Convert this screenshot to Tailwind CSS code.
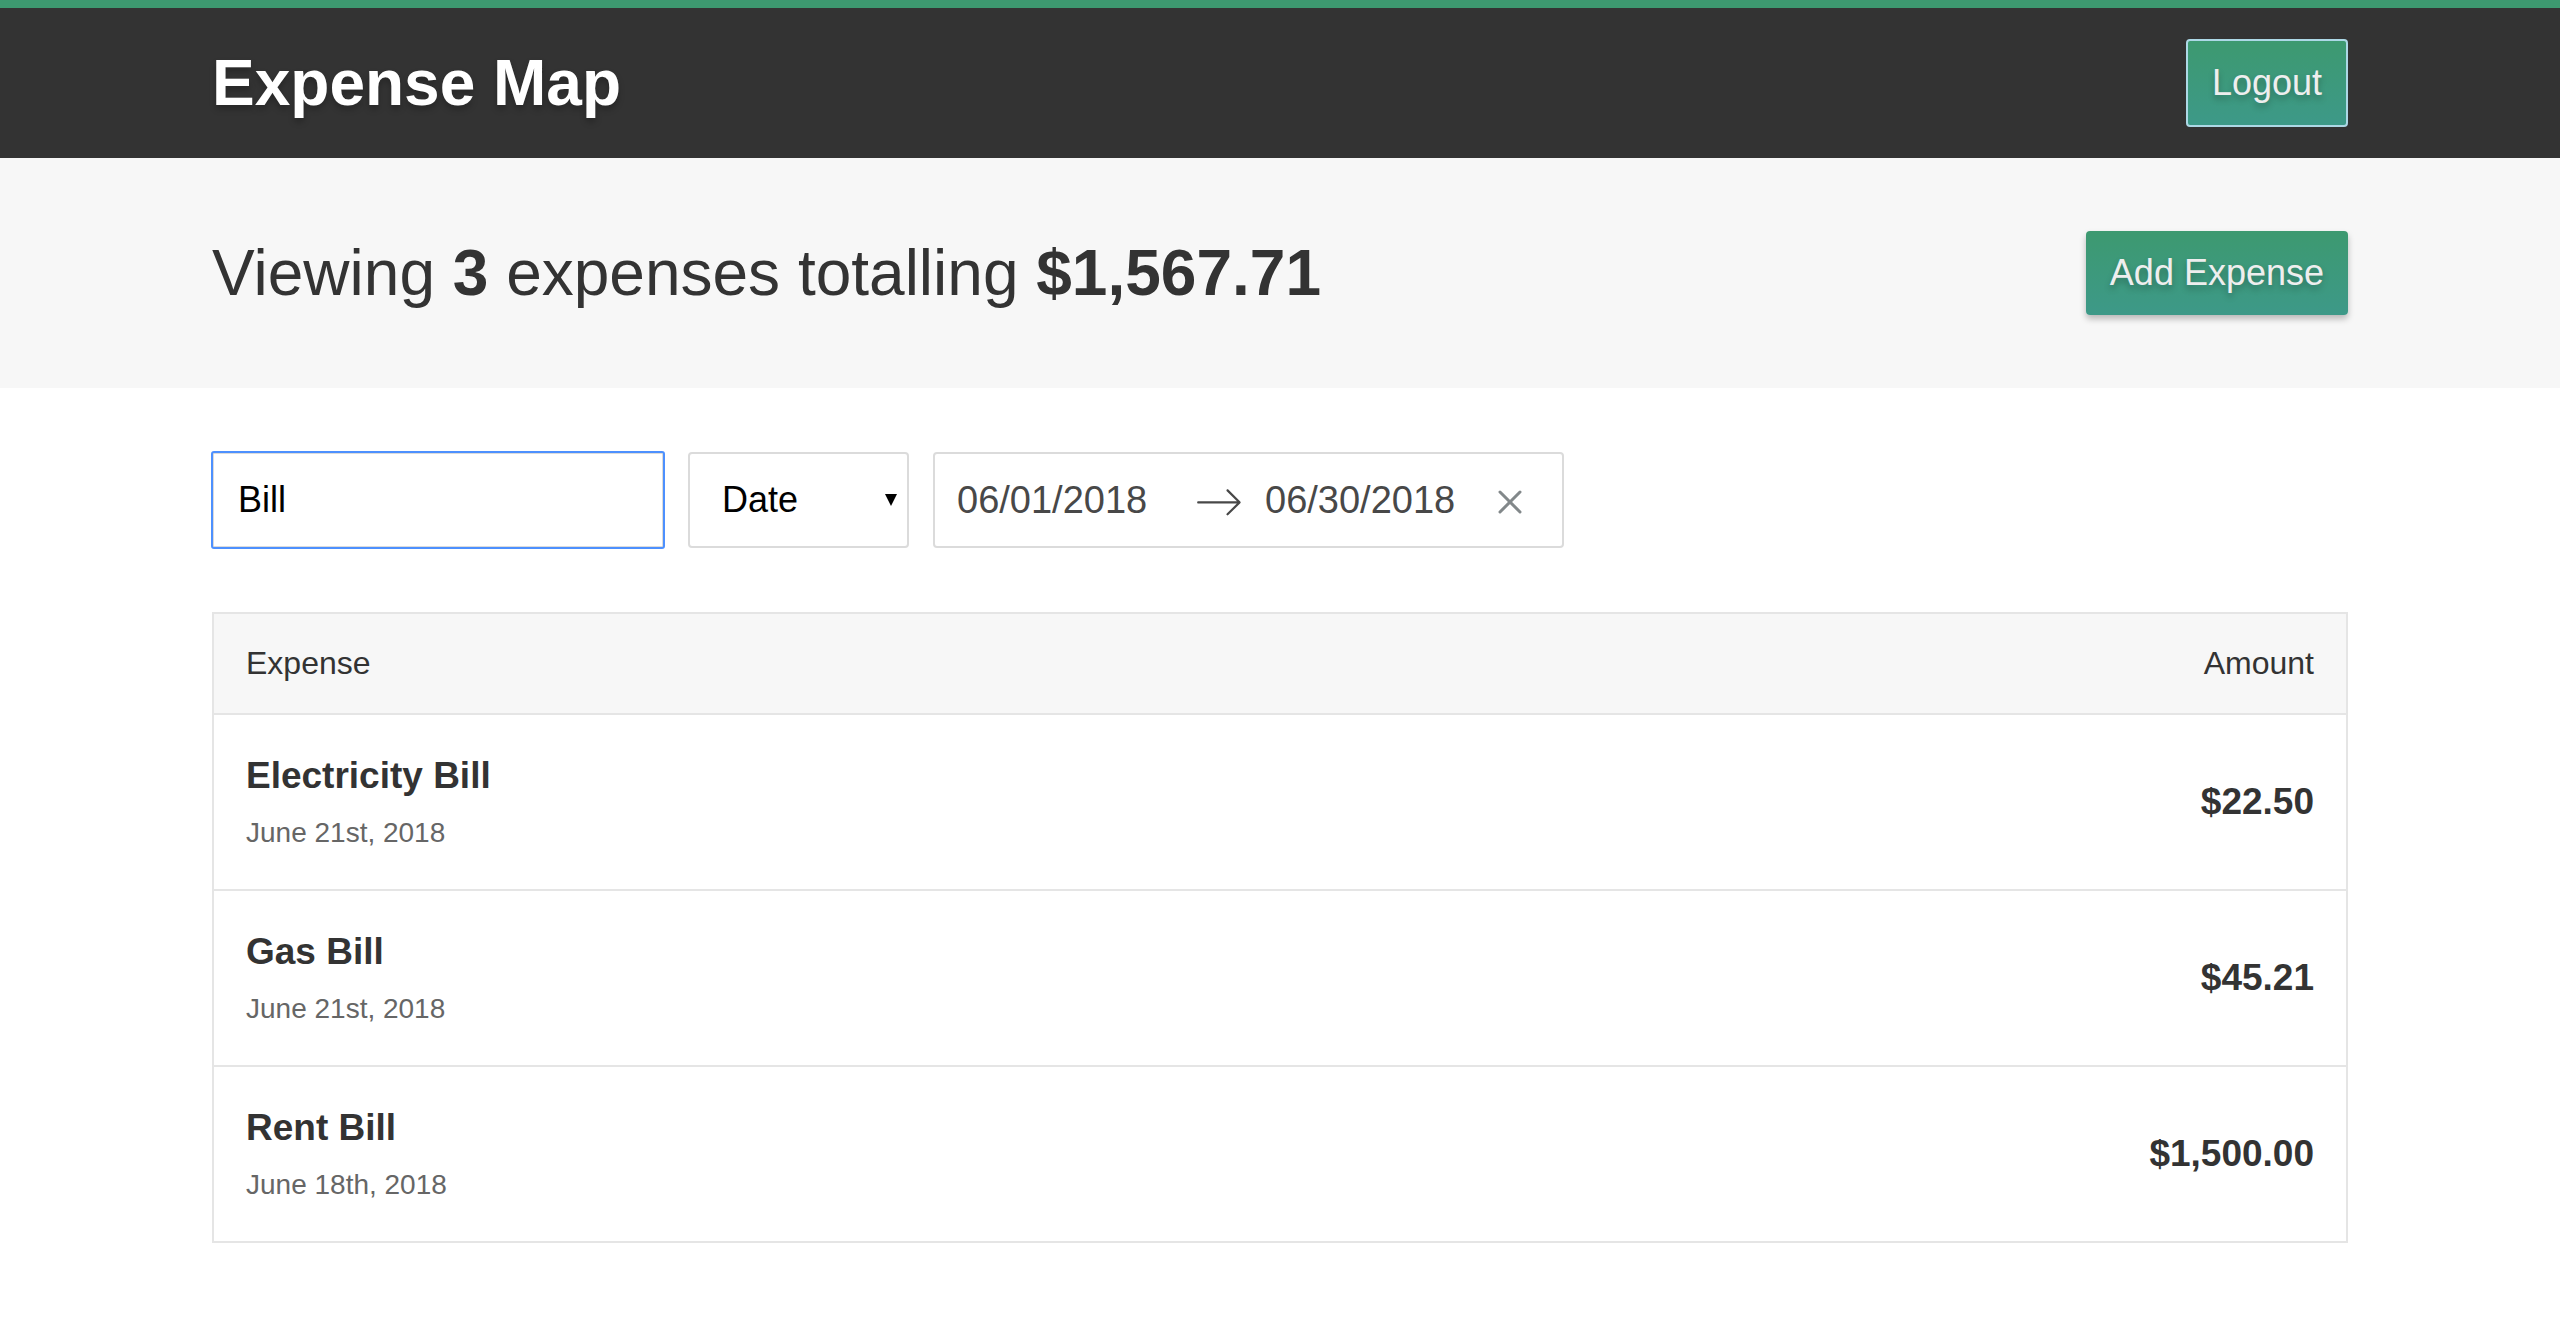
<!DOCTYPE html>
<html lang="en">
<head>
<meta charset="utf-8">
<meta name="viewport" content="width=device-width, initial-scale=1">
<title>Expense Map</title>
<script src="https://cdn.jsdelivr.net/npm/@tailwindcss/browser@4"></script>
</head>
<body class="min-h-screen bg-white font-['Liberation_Sans',Arial,sans-serif] text-[#333]">

<header class="border-t-8 border-[#3d9970] bg-[#333]">
  <div class="mx-auto flex max-w-[2200px] items-center justify-between px-8 py-[31px]">
    <h1 class="text-[64px] leading-[72px] font-bold text-white [text-shadow:0_4px_6px_rgba(0,0,0,0.25)]">Expense Map</h1>
    <button type="button" class="rounded-sm border-2 border-[#add8e6] bg-linear-to-b from-[#3d9970] to-[#3d9988] px-6 py-[22px] text-[36px] leading-10 text-[#eee] [text-shadow:0_4px_6px_rgba(0,0,0,0.25)]">Logout</button>
  </div>
</header>

<main>
  <section class="bg-[#f7f7f7]">
    <div class="mx-auto flex max-w-[2200px] items-center justify-between px-8 py-[73px]">
      <h2 class="text-[64px] leading-[72px]">Viewing <strong>3</strong> expenses totalling <strong>$1,567.71</strong></h2>
      <button type="button" class="rounded-sm bg-linear-to-b from-[#3d9970] to-[#3d9988] px-6 py-[22px] text-[36px] leading-10 text-[#eee] shadow-[0_4px_6px_rgba(0,0,0,0.25)] [text-shadow:0_4px_6px_rgba(0,0,0,0.25)]">Add Expense</button>
    </div>
  </section>

  <div class="mx-auto flex max-w-[2200px] flex-col gap-16 px-8 py-16">
    <form class="flex flex-wrap gap-6">
      <input type="text" value="Bill" aria-label="Search expenses" class="h-24 w-[452px] rounded-xs border-2 border-[#dbdbdb] bg-white px-6 text-[36px] text-black outline-2 -outline-offset-1 outline-[#4d90fe]">

      <div class="grid items-center">
        <select aria-label="Sort by" class="col-start-1 row-start-1 h-24 w-[221px] appearance-none rounded-sm border-2 border-[#dbdbdb] bg-white px-8 text-[36px] text-black">
          <option>Date</option>
          <option>Amount</option>
        </select>
        <svg class="pointer-events-none col-start-1 row-start-1 mr-3 h-3 w-3 justify-self-end" viewBox="0 0 12 12" aria-hidden="true"><path d="M0 0h12L6 12z" fill="#000"/></svg>
      </div>

      <div class="flex h-24 items-center rounded-sm border-2 border-[#dbdbdb] bg-white text-[38px] text-[#484848]">
        <input type="text" value="06/01/2018" aria-label="Start date" class="h-full w-[260px] px-[22px] outline-none">
        <svg class="box-content h-12 w-12 pt-1" viewBox="0 0 1000 1000" fill="#484848" aria-hidden="true"><path d="M694 242l249 250c12 11 12 21 1 32L694 773c-5 5-10 7-16 7s-11-2-16-7c-11-11-11-21 0-32l210-210H68c-13 0-23-10-23-23s10-23 23-23h806L662 275c-21-22 11-54 32-33z"/></svg>
        <input type="text" value="06/30/2018" aria-label="End date" class="h-full w-[235px] pl-[22px] outline-none">
        <button type="button" aria-label="Clear dates" class="pt-1 pr-10 pl-5">
          <svg class="h-6 w-6" viewBox="0 0 24 24" fill="none" stroke="#82888a" stroke-width="3" stroke-linecap="round" aria-hidden="true"><path d="M2 2l20 20M22 2L2 22"/></svg>
        </button>
      </div>
    </form>

    <table class="w-full border-separate border-spacing-0 border-2 border-[#e5e5e5]">
      <thead>
        <tr class="bg-[#f7f7f7] text-[32px] leading-[35px]">
          <th scope="col" class="p-8 text-left font-normal">Expense</th>
          <th scope="col" class="p-8 text-right font-normal">Amount</th>
        </tr>
      </thead>
      <tbody>
        <tr>
          <td class="border-t-2 border-[#e5e5e5] px-8 py-10">
            <h3 class="text-[37px] leading-[42px] font-bold">Electricity Bill</h3>
            <p class="mt-5 text-[28px] leading-8 text-[#666]">June 21st, 2018</p>
          </td>
          <td class="border-t-2 border-[#e5e5e5] px-8 py-10 text-right text-[37px] leading-[42px] font-bold">$22.50</td>
        </tr>
        <tr>
          <td class="border-t-2 border-[#e5e5e5] px-8 py-10">
            <h3 class="text-[37px] leading-[42px] font-bold">Gas Bill</h3>
            <p class="mt-5 text-[28px] leading-8 text-[#666]">June 21st, 2018</p>
          </td>
          <td class="border-t-2 border-[#e5e5e5] px-8 py-10 text-right text-[37px] leading-[42px] font-bold">$45.21</td>
        </tr>
        <tr>
          <td class="border-t-2 border-[#e5e5e5] px-8 py-10">
            <h3 class="text-[37px] leading-[42px] font-bold">Rent Bill</h3>
            <p class="mt-5 text-[28px] leading-8 text-[#666]">June 18th, 2018</p>
          </td>
          <td class="border-t-2 border-[#e5e5e5] px-8 py-10 text-right text-[37px] leading-[42px] font-bold">$1,500.00</td>
        </tr>
      </tbody>
    </table>
  </div>
</main>
</body>
</html>
